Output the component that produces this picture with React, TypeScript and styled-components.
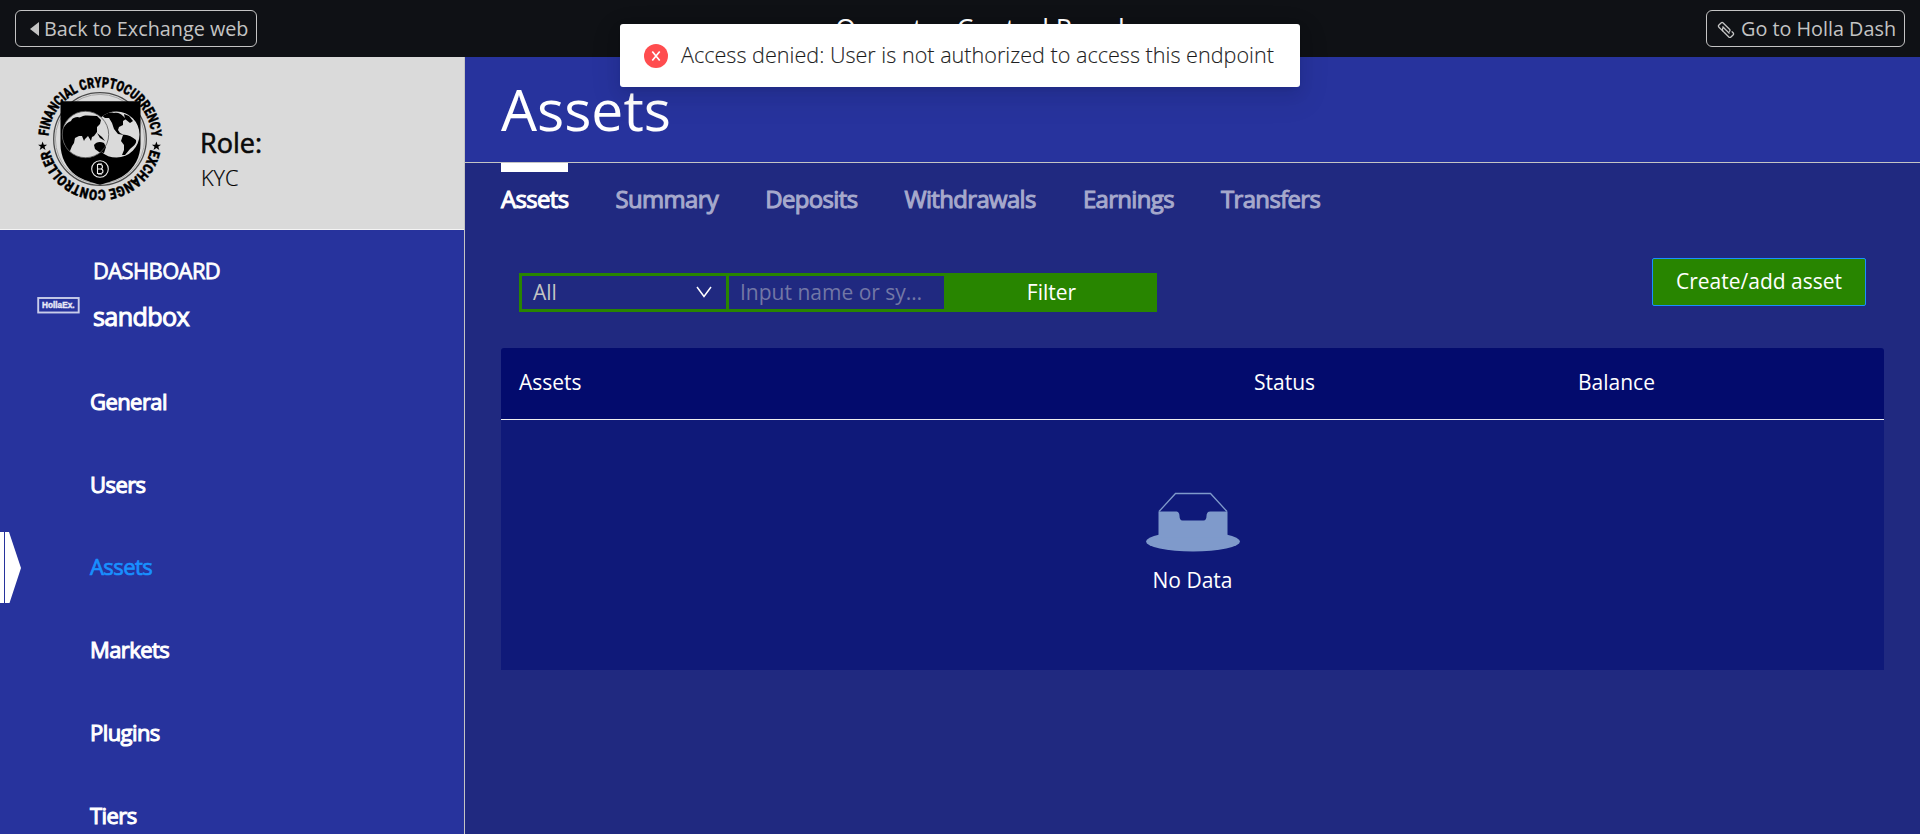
import React from 'react';
import styled, { createGlobalStyle, css } from 'styled-components';

const GlobalStyle = createGlobalStyle`
  * { box-sizing: border-box; }
  html, body { margin: 0; padding: 0; overflow: hidden; }
  body {
    font-family: 'Open Sans', 'Noto Sans', sans-serif;
    font-size: 21px;
    color: #fff;
    background: #202980;
  }
  button, input { font: inherit; }
`;

const heavy = css`
  -webkit-text-stroke: 1.05px currentColor;
  letter-spacing: -0.026em;
`;

const Page = styled.div`
  display: flex;
  flex-direction: column;
  height: 834px;
  overflow: hidden;
`;

const TopBar = styled.header`
  display: flex;
  flex: none;
  align-items: center;
  justify-content: space-between;
  height: 57px;
  padding: 0 15px;
  background: #0f1115;
`;

const TopButton = styled.button<{ $width: number; $indent: number }>`
  display: flex;
  align-items: center;
  gap: 5px;
  width: ${(p) => p.$width}px;
  height: 37px;
  padding: 0 0 0 ${(p) => p.$indent}px;
  color: #c4c4c4;
  font-size: 19.8px;
  line-height: 35px;
  white-space: nowrap;
  background: transparent;
  border: 1px solid #c4c4c4;
  border-radius: 6px;
`;

const TopTitle = styled.div`
  flex: 1;
  padding-right: 3px;
  text-align: center;
  font-size: 26.7px;
  line-height: 40px;
`;

const Main = styled.div`
  display: flex;
  flex: 1;
  min-height: 0;
`;

const Sidebar = styled.aside`
  display: flex;
  flex: none;
  flex-direction: column;
  width: 465px;
  background: #27339d;
  border-right: 1px solid #c4c4c4;
`;

const RolePanel = styled.section`
  display: flex;
  flex: none;
  height: 173px;
  padding-left: 32px;
  color: #0a0a0a;
  background: #dadada;
  border-bottom: 1px solid #f4f4f4;
`;

const Emblem = styled.svg`
  flex: none;
  width: 136px;
  height: 136px;
  margin-top: 14px;
`;

const RoleText = styled.div`
  display: flex;
  flex-direction: column;
  padding: 67px 0 0 32px;
`;

const RoleLabel = styled.div`
  font-size: 27px;
  line-height: 38px;
  -webkit-text-stroke: 0.6px currentColor;
`;

const RoleName = styled.div`
  padding-left: 1px;
  color: #000;
  font-size: 21.6px;
  font-weight: 300;
  line-height: 31px;
  -webkit-text-stroke: 0.2px currentColor;
`;

const Dashboard = styled.section`
  display: flex;
  flex: none;
  height: 131px;
  padding: 18px 0 0 37px;
`;

const ExchangeLogo = styled.svg`
  flex: none;
  width: 43px;
  height: 17px;
  margin: 49px 13px 0 0;
`;

const DashboardTitle = styled.div`
  ${heavy}
  -webkit-text-stroke-width: 0.8px;
  font-size: 21.9px;
  line-height: 46px;
`;

const DashboardName = styled.div`
  ${heavy}
  font-size: 25.2px;
  line-height: 44px;
`;

const Nav = styled.nav`
  display: flex;
  flex-direction: column;
`;

const NavItem = styled.a<{ $active?: boolean }>`
  ${heavy}
  display: flex;
  flex: none;
  align-items: center;
  height: 82.8px;
  padding-left: ${(p) => (p.$active ? 0 : 90)}px;
  color: ${(p) => (p.$active ? '#1890ff' : '#fff')};
  -webkit-text-stroke-width: ${(p) => (p.$active ? 0.7 : 1.05)}px;
  font-size: 22px;
`;

const NavLabel = styled.span`
  padding-bottom: 3px;
`;

const Marker = styled.svg`
  width: 21px;
  height: 71px;
  margin-right: 69px;
`;

const Content = styled.main`
  display: flex;
  flex: 1;
  flex-direction: column;
  min-width: 0;
`;

const PageHead = styled.div`
  flex: none;
  height: 106px;
  padding: 13px 0 0 36px;
  background: #27339d;
  border-bottom: 1px solid #c4c4c4;
`;

const PageTitle = styled.h1`
  margin: 0;
  font-size: 57px;
  font-weight: 400;
  line-height: 78px;
`;

const Tabs = styled.div`
  display: flex;
  flex: none;
  gap: 47.1px;
  height: 63px;
  padding-left: 36px;
`;

const Tab = styled.div<{ $active?: boolean }>`
  ${heavy}
  color: ${(p) => (p.$active ? '#fff' : '#a6a9cc')};
  border-top: 9px solid ${(p) => (p.$active ? '#fff' : 'transparent')};
  font-size: 23.9px;
  line-height: 53px;
`;

const Toolbar = styled.div`
  display: flex;
  flex: none;
  justify-content: space-between;
  height: 122px;
  padding: 32px 54px 0 54px;
`;

const FilterGroup = styled.div`
  display: flex;
  height: 39px;
  margin-top: 15px;
`;

const Select = styled.div`
  display: flex;
  align-items: center;
  justify-content: space-between;
  width: 210px;
  padding: 0 14px 2px 11px;
  color: #c4c4c4;
  border: 3px solid #288500;
`;

const SearchInput = styled.input`
  width: 218px;
  margin-left: -3px;
  padding: 0 8px 2px 11px;
  color: #fff;
  text-overflow: ellipsis;
  background: transparent;
  border: 3px solid #288500;
  border-right: 0;
  border-radius: 0;
  outline: 0;
  &::placeholder { color: #7277a6; opacity: 1; }
`;

const FilterButton = styled.button`
  width: 213px;
  padding: 0 0 2px 2px;
  color: #fff;
  background: #288500;
  border: 0;
`;

const CreateButton = styled.button`
  width: 214px;
  height: 48px;
  padding: 0 0 2px;
  color: #fff;
  background: #288500;
  border: 1px solid #1890ff;
  border-radius: 2px;
`;

const Table = styled.div`
  flex: none;
  width: 1383px;
  margin-left: 36px;
`;

const TableHead = styled.div`
  display: grid;
  grid-template-columns: 735px 324px 1fr;
  align-items: center;
  height: 72px;
  padding: 0 0 3px 18px;
  background: #030b6d;
  border-bottom: 1px solid #f0f0f0;
  border-radius: 3px 3px 0 0;
`;

const TableBody = styled.div`
  display: flex;
  flex-direction: column;
  align-items: center;
  height: 250px;
  padding-top: 72px;
  background: #0f1979;
`;

const EmptyText = styled.div`
  margin-top: 11px;
  line-height: 35px;
`;

const Toast = styled.div`
  position: absolute;
  top: 24px;
  left: 620px;
  display: flex;
  align-items: center;
  gap: 13px;
  width: 680px;
  height: 63px;
  padding-left: 24px;
  color: rgba(0, 0, 0, 0.85);
  font-size: 21.6px;
  font-weight: 300;
  white-space: nowrap;
  background: #fff;
  border-radius: 3px;
  box-shadow: 0 3px 6px -4px rgba(0, 0, 0, 0.12), 0 6px 16px rgba(0, 0, 0, 0.08),
    0 9px 28px 8px rgba(0, 0, 0, 0.05);
`;

const ErrorIcon = styled.svg`
  flex: none;
  width: 24px;
  height: 24px;
`;

const ToastText = styled.span`
  padding-bottom: 2px;
  -webkit-text-stroke: 0.2px currentColor;
`;

const EmblemLogo = () => (
  <Emblem viewBox="32 71 136 136">
    <defs>
      <path id="arcTop" d="M48.4 139 A51.6 51.6 0 1 1 151.6 139" />
      <path id="arcBottom" d="M150.7 148 A51.6 51.6 0 0 1 49.3 148" />
      <clipPath id="globes">
        <circle cx="85.5" cy="134.5" r="23.2" />
        <circle cx="116.5" cy="134.5" r="23" />
      </clipPath>
    </defs>
    <g
      fontFamily="Roboto, 'Liberation Sans', sans-serif"
      fontWeight="900"
      fontSize="14.4"
      fill="#000"
      stroke="#000"
      strokeWidth="0.4"
    >
      <text>
        <textPath href="#arcTop" startOffset="3" textLength="157" lengthAdjust="spacingAndGlyphs">
          FINANCIAL CRYPTOCURRENCY
        </textPath>
      </text>
      <text>
        <textPath href="#arcBottom" startOffset="1.5" textLength="139" lengthAdjust="spacingAndGlyphs">
          EXCHANGE CONTROLLER
        </textPath>
      </text>
    </g>
    <g fill="#000">
      <path d="M42.6 141.5l1.2 3.200h3.300l-2.600 2.100 1 3.300-2.900-2-2.900 2 1-3.300-2.600-2.100h3.300z" />
      <path d="M156.400 141.500l1.200 3.200h3.300l-2.600 2.100 1 3.300-2.900-2-2.900 2 1-3.300-2.600-2.100h3.300z" />
    </g>
    <g fill="none" stroke="#4a4a4a">
      <circle cx="100" cy="139" r="46.3" strokeWidth="1.3" />
      <circle cx="100" cy="139" r="44.6" stroke="#a8a8a8" strokeWidth="1" />
    </g>
    <path
      d="M60.5 101.3h80V144c0 13-6 24-16 31-8 5.5-17 7.5-24.5 9.8-7.5-2.3-16.5-4.3-24.5-9.8-9-7-15-18-15-31z"
      fill="#000"
    />
    <g clipPath="url(#globes)">
      <rect x="60" y="108" width="82" height="52" fill="#dadada" />
      <path
        d="M64 127c2-3 4-5 7-6 1-3 4-4 7-4 1 1 3 0 5-1 4-1 9 0 14 0l4 4-1 4-3 3 0 5-3 4-2 1-1 4-3-5-3 3-1 2-2-5-3 0-4 2-1 5-2 3-2 5-3 3-2-3 0-6-2-4-4-1-1-5z"
        fill="#000"
      />
      <path d="M94 145c2-3 6-4 10-2l2 4-2 6-5-1-4-3z" fill="#000" />
      <path d="M97 133l5 4 3 4-5-3z" fill="#000" />
      <path
        d="M101 115c4-2 8-3 13-2 4-1 7 1 9 3l3 3-3 2 0 4-4 2-1 3 2 3 4 2-6-1-4-5-2-6-3-5-4 0z"
        fill="#000"
      />
      <path d="M123 135c4-1 9 2 13 5 1 4-3 6-6 9l-5 6-3 0 2-5 0-5-3-4z" fill="#000" />
      <path d="M124 114l5 2 4 5-3 2-5-4z" fill="#000" />
    </g>
    <circle cx="85.5" cy="134.5" r="23.2" fill="none" stroke="#555" strokeWidth="0.8" />
    <circle cx="100" cy="169" r="8.3" fill="#000" stroke="#eee" strokeWidth="1.1" />
    <path
      d="M97.5 164.5v9h3.2c3 0 3-4.5 0-4.5h-3.2 3c2.6 0 2.6-4.5 0-4.5zM99 163v1.5M101 163v1.5M99 173.5v1.5M101 173.5v1.5"
      fill="none"
      stroke="#eee"
      strokeWidth="1.1"
    />
  </Emblem>
);

const HollaLogo = () => (
  <ExchangeLogo viewBox="0 0 43 17">
    <rect x="1.2" y="1" width="40.5" height="14.5" fill="none" stroke="#c9cdea" strokeWidth="1.9" />
    <text
      x="5"
      y="11.3"
      fill="#e8eaf8"
      stroke="#e8eaf8"
      strokeWidth="0.4"
      fontFamily="'Liberation Sans', sans-serif"
      fontWeight="700"
      fontSize="8.5"
      textLength="32.5"
      lengthAdjust="spacingAndGlyphs"
    >
      HollaEx.
    </text>
  </ExchangeLogo>
);

const navItems = ['General', 'Users', 'Assets', 'Markets', 'Plugins', 'Tiers'];
const tabs = ['Assets', 'Summary', 'Deposits', 'Withdrawals', 'Earnings', 'Transfers'];

export default function App() {
  return (
    <Page>
      <GlobalStyle />
      <TopBar>
        <TopButton $width={242} $indent={14}>
          <svg width="9" height="14" viewBox="0 0 9 14">
            <path d="M9 0v14L0 7z" fill="#c4c4c4" />
          </svg>
          Back to Exchange web
        </TopButton>
        <TopTitle>Operator Control Panel</TopTitle>
        <TopButton $width={199} $indent={10}>
          <svg width="19" height="18" viewBox="0 0 19 18" fill="none" stroke="#c4c4c4" strokeWidth="1.3">
            <g transform="translate(9 10) rotate(45)">
              <path d="M-1 3H-7q-1.5 0-1.5-1.5v-3Q-8.5-3-7-3H2q1.5 0 1.5 1.5v.5" />
              <path d="M1 3h6q1.5 0 1.5-1.5v-3Q8.5-3 7-3H5M-3.5-.5v.5q0 3 2.5 3h3" />
              <path d="M-5 0H5" />
            </g>
          </svg>
          Go to Holla Dash
        </TopButton>
      </TopBar>
      <Main>
        <Sidebar>
          <RolePanel>
            <EmblemLogo />
            <RoleText>
              <RoleLabel>Role:</RoleLabel>
              <RoleName>KYC</RoleName>
            </RoleText>
          </RolePanel>
          <Dashboard>
            <HollaLogo />
            <div>
              <DashboardTitle>DASHBOARD</DashboardTitle>
              <DashboardName>sandbox</DashboardName>
            </div>
          </Dashboard>
          <Nav>
            {navItems.map((item) => (
              <NavItem key={item} $active={item === 'Assets'}>
                {item === 'Assets' && (
                  <Marker viewBox="0 0 21 71" fill="#fff">
                    <path d="M0 0h4v71H0zM5 0h4l12 36L9.5 71H5z" />
                  </Marker>
                )}
                <NavLabel>{item}</NavLabel>
              </NavItem>
            ))}
          </Nav>
        </Sidebar>
        <Content>
          <PageHead>
            <PageTitle>Assets</PageTitle>
          </PageHead>
          <Tabs>
            {tabs.map((tab, i) => (
              <Tab key={tab} $active={i === 0}>
                {tab}
              </Tab>
            ))}
          </Tabs>
          <Toolbar>
            <FilterGroup>
              <Select>
                All
                <svg width="16" height="12" viewBox="0 0 16 12" fill="none" stroke="#fff" strokeWidth="1.5">
                  <path d="M1 1l7 9.5L15 1" />
                </svg>
              </Select>
              <SearchInput placeholder="Input name or symbol" />
              <FilterButton>Filter</FilterButton>
            </FilterGroup>
            <CreateButton>Create/add asset</CreateButton>
          </Toolbar>
          <Table>
            <TableHead>
              <span>Assets</span>
              <span>Status</span>
              <span>Balance</span>
            </TableHead>
            <TableBody>
              <svg width="94" height="60" viewBox="0 0 94 60">
                <ellipse cx="47" cy="49.5" rx="47" ry="10" fill="#7f9acb" />
                <path d="M13 19.5L29.5 1.5h35L81 19.5" fill="none" stroke="#7f9acb" strokeWidth="1.3" />
                <path
                  d="M12.5 19.5h17c3 0 4 2 4 4.5 0 2.5 1 4.5 3 4.500h21c2 0 3-2 3-4.500s1-4.500 4-4.500h17v26h-69z"
                  fill="#7f9acb"
                />
              </svg>
              <EmptyText>No Data</EmptyText>
            </TableBody>
          </Table>
        </Content>
      </Main>
      <Toast>
        <ErrorIcon viewBox="0 0 24 24">
          <circle cx="12" cy="12" r="12" fill="#ff4d4f" />
          <path d="M8.3 7.5l7.4 9M15.7 7.5l-7.4 9" stroke="#fff" strokeWidth="1.7" />
        </ErrorIcon>
        <ToastText>Access denied: User is not authorized to access this endpoint</ToastText>
      </Toast>
    </Page>
  );
}
